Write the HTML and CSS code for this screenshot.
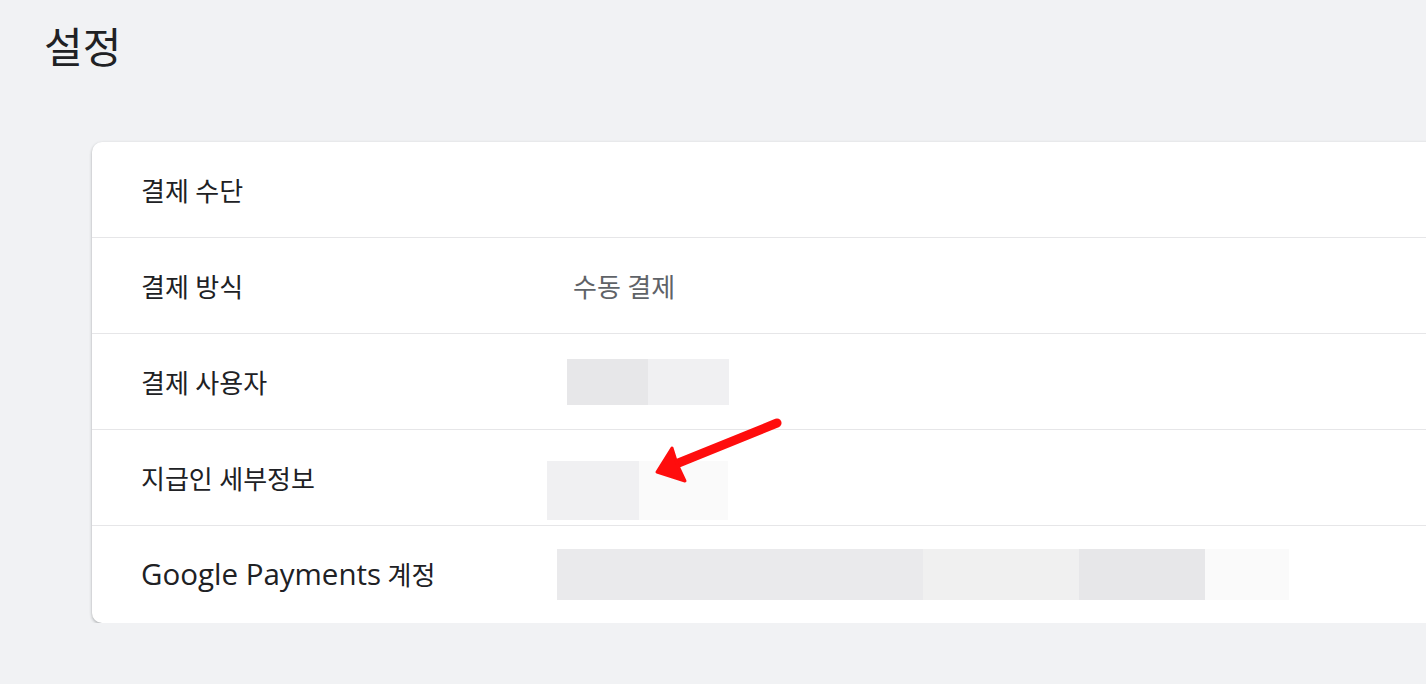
FILE: index.html
```html
<!DOCTYPE html>
<html lang="ko">
<head>
    <meta charset="UTF-8">
    <meta name="viewport" content="width=device-width, initial-scale=1.0">
    <title>설정</title>
    <link rel="stylesheet" href="styles.css">
</head>
<body>
    <h1 class="page-title">설정</h1>

    <div class="card">
        <div class="row">
            <div class="label">결제 수단</div>
            <div class="value"></div>
        </div>
        <div class="row">
            <div class="label">결제 방식</div>
            <div class="value value-text">수동 결제</div>
        </div>
        <div class="row">
            <div class="label">결제 사용자</div>
            <div class="value">
                <div class="blur blur-user">
                    <span class="tone-b" style="width: 81px;"></span>
                    <span class="tone-c" style="width: 81px;"></span>
                </div>
            </div>
        </div>
        <div class="row">
            <div class="label">지급인 세부정보</div>
            <div class="value">
                <div class="blur blur-payer">
                    <span class="tone-c" style="width: 92px;"></span>
                    <span class="tone-e" style="width: 89px;"></span>
                </div>
            </div>
        </div>
        <div class="row">
            <div class="label"><span class="latin">Google Payments</span> 계정</div>
            <div class="value">
                <div class="blur blur-account">
                    <span class="tone-a" style="width: 366px;"></span>
                    <span class="tone-d" style="width: 156px;"></span>
                    <span class="tone-b" style="width: 126px;"></span>
                    <span class="tone-e" style="width: 84px;"></span>
                </div>
            </div>
        </div>

        <!-- annotation arrow -->
        <svg class="arrow" width="140" height="80" viewBox="0 0 140 80">
            <line x1="128" y1="9" x2="22" y2="52" stroke="#ff0d0d" stroke-width="9" stroke-linecap="round"/>
            <polygon points="8,58 23,34 28,50 36,67" fill="#ff0d0d" stroke="#ff0d0d" stroke-width="3" stroke-linejoin="round"/>
        </svg>
    </div>
</body>
</html>
```

FILE: styles.css
```css
body {
    margin: 0;
    padding: 0 0 0 44px;
    background-color: #f1f2f4;
    font-family: Roboto, "Noto Sans CJK KR", sans-serif;
    color: #202124;
    overflow: hidden;
}

.page-title {
    margin: 0;
    padding-top: 23px;
    height: 142px;
    box-sizing: border-box;
    font-size: 42px;
    font-weight: 400;
    line-height: 52px;
}

.card {
    position: relative;
    margin-left: 48px;
    margin-right: -40px;
    padding-bottom: 2px;
    background-color: #fff;
    border-radius: 10px;
    box-shadow: 0 1px 3px rgba(60, 64, 67, 0.3), 0 2px 3px rgba(60, 64, 67, 0.12);
}

.row {
    display: flex;
    align-items: center;
    height: 95px;
    border-top: 1px solid #e6e6e8;
}

.row:first-child {
    border-top: none;
}

.label {
    width: 426px;
    padding-left: 49px;
    flex-shrink: 0;
    font-size: 26px;
}

.latin {
    font-family: "Open Sans", sans-serif;
    font-size: 29.5px;
}

.value {
    font-size: 26px;
}

.value-text {
    color: #5f6368;
    padding-left: 6px;
}

.blur {
    display: flex;
}

.blur span {
    display: block;
}

.blur-user span {
    height: 46px;
}

.blur-payer {
    margin-left: -20px;
    margin-top: 26px;
}

.blur-payer span {
    height: 59px;
}

.blur-account {
    margin-left: -10px;
    margin-top: 2px;
}

.blur-account span {
    height: 51px;
}

.tone-a { background-color: #eaeaec; }
.tone-b { background-color: #e7e7e9; }
.tone-c { background-color: #f0f0f2; }
.tone-d { background-color: #f0f0f0; }
.tone-e { background-color: #fafafa; }

.arrow {
    position: absolute;
    left: 557px;
    top: 272px;
}
```
